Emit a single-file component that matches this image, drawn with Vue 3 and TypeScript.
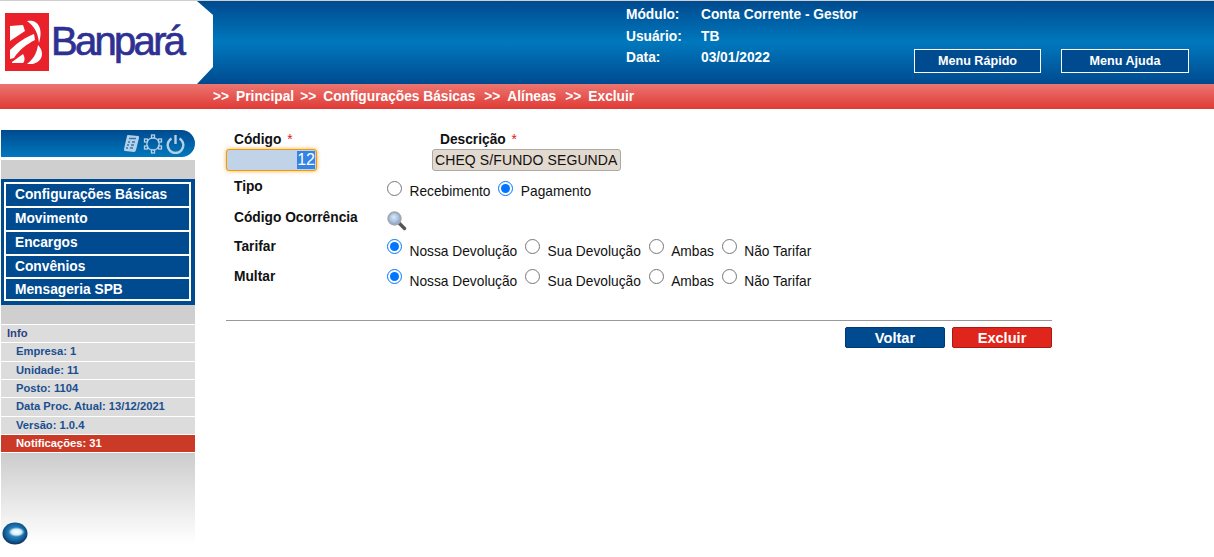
<template>
  <div class="page">
    <header class="top">
      <div class="logo">
        <svg class="logo__mark" width="44" height="58" viewBox="0 0 44 58">
          <rect width="44" height="58" fill="#e8212b" />
          <g fill="#fff">
            <path d="M5 13 L18 12 L20 18 L5 28 Z" />
            <path d="M22 8 C32 6 39 14 34 30 C33 20 30 14 22 8 Z" />
            <path d="M5 37 C13 29 21 24 29 21 L30 27 C22 31 14 37 9 45 L5 46 Z" />
            <path d="M7 49 L18 41 C20 44 20 48 18 50 L7 50 Z" />
            <path d="M33 32 C39 38 39 48 28 51 L22 51 C30 45 32 38 33 32 Z" />
          </g>
        </svg>
        <span class="logo__text">Banpará</span>
      </div>
      <div class="info">
        <template v-for="row in infoRows" :key="row.label">
          <span>{{ row.label }}</span>
          <span>{{ row.value }}</span>
        </template>
      </div>
      <div class="top__menu">
        <button class="menu-btn">Menu Rápido</button>
        <button class="menu-btn">Menu Ajuda</button>
      </div>
    </header>

    <nav class="crumb">
      <span v-for="item in crumbs" :key="item" class="crumb__item"><span>&gt;&gt;</span><span>{{ item }}</span></span>
    </nav>

    <div class="content">
      <aside class="side">
        <div class="side__head">
          <svg width="17" height="19" viewBox="0 0 17 19">
            <path d="M5 1 L15 2 Q16.500 2 16 4 L13 16 Q12.500 18 11 18 L2 17 Q0.500 17 1 15 L4 2 Q4 1 5 1 Z" fill="#b5d0e6" />
            <path d="M6 4.500 H13 M5 8 H7 M9 8 H12 M4 11 H6 M8 11 H11 M3 14 H5 M7 14 H10" stroke="#2f78b4" stroke-width="1.300" fill="none" />
          </svg>
          <svg width="20" height="20" viewBox="0 0 20 20" fill="none" stroke="#b5d0e6" stroke-width="1.300">
            <circle cx="10" cy="10" r="6.200" />
            <rect x="8.500" y="1" width="3" height="3" fill="#0a5fa3" />
            <rect x="8.500" y="16" width="3" height="3" fill="#0a5fa3" />
            <rect x="1.500" y="5" width="3" height="3" fill="#0a5fa3" />
            <rect x="15.500" y="5" width="3" height="3" fill="#0a5fa3" />
            <rect x="1.500" y="12" width="3" height="3" fill="#0a5fa3" />
            <rect x="15.500" y="12" width="3" height="3" fill="#0a5fa3" />
          </svg>
          <svg width="19" height="20" viewBox="0 0 19 20" fill="none" stroke="#b5d0e6" stroke-width="2.400">
            <path d="M5.500 4.500 A7.800 7.800 0 1 0 13.500 4.500" />
            <path d="M9.500 1 V10" />
          </svg>
        </div>
        <div class="side__grey"></div>
        <ul class="side__menu">
          <li v-for="item in menu" :key="item">{{ item }}</li>
        </ul>
        <div class="side__grey side__grey--second"></div>
        <div class="side__rows">
          <div class="side__title">Info</div>
          <div v-for="row in sideRows" :key="row" class="side__row">{{ row }}</div>
          <div class="side__row side__row--alert">Notificações: 31</div>
        </div>
        <div class="side__fade">
          <svg width="26" height="25" viewBox="0 0 26 25">
            <defs>
              <radialGradient id="bubble" cx="0.5" cy="0.45" r="0.55">
                <stop offset="0" stop-color="#4fa6d8" />
                <stop offset="0.7" stop-color="#14629f" />
                <stop offset="1" stop-color="#0b2f5c" />
              </radialGradient>
              <radialGradient id="shine" cx="0.5" cy="0.5" r="0.5">
                <stop offset="0" stop-color="#ffffff" />
                <stop offset="0.6" stop-color="#d5edf8" />
                <stop offset="1" stop-color="#6fbbe0" stop-opacity="0" />
              </radialGradient>
            </defs>
            <ellipse cx="13" cy="12.500" rx="12.500" ry="11" fill="url(#bubble)" />
            <ellipse cx="14.500" cy="11" rx="8.500" ry="5" fill="url(#shine)" />
          </svg>
        </div>
      </aside>

      <main class="form">
        <div class="form__top">
          <div class="field field--code">
            <label>Código <i>*</i></label>
            <input ref="codeRef" class="code-input" value="12" readonly />
          </div>
          <div class="field field--desc">
            <label>Descrição <i>*</i></label>
            <input class="desc-input" value="CHEQ S/FUNDO SEGUNDA" readonly />
          </div>
        </div>

        <div class="row row--tipo">
          <b>Tipo</b>
          <div class="options">
            <label v-for="opt in tipos" :key="opt.text">
              <input type="radio" name="tipo" :checked="opt.on" />
              <span>{{ opt.text }}</span>
            </label>
          </div>
        </div>

        <div class="row row--ocorr">
          <b>Código Ocorrência</b>
          <svg width="20" height="20" viewBox="0 0 20 20">
            <defs>
              <radialGradient id="lens" cx="0.45" cy="0.4" r="0.6">
                <stop offset="0" stop-color="#dce9f8" />
                <stop offset="0.7" stop-color="#9dbbe0" />
                <stop offset="1" stop-color="#8aa0bc" />
              </radialGradient>
            </defs>
            <path d="M11.500 11.500 L17.500 17.500" stroke="#555" stroke-width="3.400" stroke-linecap="round" />
            <circle cx="7.500" cy="7.500" r="6.300" fill="url(#lens)" stroke="#a3a8ad" stroke-width="1.800" />
          </svg>
        </div>

        <div v-for="group in radioGroups" :key="group" class="row row--tarifa">
          <b>{{ group }}</b>
          <div class="options">
            <label v-for="(opt, idx) in tarifas" :key="opt">
              <input type="radio" :name="group" :checked="idx === 0" />
              <span>{{ opt }}</span>
            </label>
          </div>
        </div>

        <hr class="form__rule" />
        <div class="form__actions">
          <button class="act act--blue">Voltar</button>
          <button class="act act--red">Excluir</button>
        </div>
      </main>
    </div>
  </div>
</template>

<script setup lang="ts">
import { onMounted, ref } from "vue";

const infoRows = [
  { label: "Módulo:", value: "Conta Corrente - Gestor" },
  { label: "Usuário:", value: "TB" },
  { label: "Data:", value: "03/01/2022" },
];
const crumbs = ["Principal", "Configurações Básicas", "Alíneas", "Excluir"];
const menu = ["Configurações Básicas", "Movimento", "Encargos", "Convênios", "Mensageria SPB"];
const sideRows = [
  "Empresa: 1",
  "Unidade: 11",
  "Posto: 1104",
  "Data Proc. Atual: 13/12/2021",
  "Versão: 1.0.4",
];
const tipos = [
  { text: "Recebimento", on: false },
  { text: "Pagamento", on: true },
];
const radioGroups = ["Tarifar", "Multar"];
const tarifas = ["Nossa Devolução", "Sua Devolução", "Ambas", "Não Tarifar"];

const codeRef = ref<HTMLInputElement | null>(null);

onMounted(() => {
  codeRef.value?.focus();
  codeRef.value?.select();
});
</script>

<style>
html,
body {
  background: #fff;
}
</style>

<style scoped>
.page {
  font-family: "Liberation Sans", Arial, sans-serif;
  font-size: 13.750px;
  color: #111;
  height: 557px;
  overflow: hidden;
}
.top {
  display: flex;
  height: 83px;
  border-top: 1px solid #cfcfcf;
  background: linear-gradient(#004a8f 0%, #0078bd 50%, #004a8f 100%);
}
.logo {
  width: 213px;
  display: flex;
  align-items: center;
  gap: 2px;
  padding: 0 0 0 5px;
  box-sizing: border-box;
  background: #fff;
  clip-path: polygon(0 0, 197px 0, 213px 14px, 213px 66px, 197px 83px, 0 83px);
}
.logo__mark {
  flex: none;
  margin-top: -2px;
}
.logo__text {
  font-size: 40px;
  letter-spacing: -2.700px;
  color: #2e3192;
  -webkit-text-stroke: 0.700px #2e3192;
  margin-top: -2px;
}
.info {
  margin-left: 413px;
  padding-top: 3px;
  display: grid;
  grid-template-columns: 75px auto;
  grid-auto-rows: 21.500px;
  align-items: center;
  align-content: start;
  color: #fff;
  font-weight: bold;
  height: 66px;
}
.top__menu {
  margin-left: auto;
  margin-right: 25px;
  padding-top: 48px;
  display: flex;
  gap: 20px;
}
.menu-btn {
  width: 127px;
  height: 24px;
  box-sizing: border-box;
  border: 1px solid #fff;
  background: #004a8f;
  color: #fff;
  font: bold 12.600px "Liberation Sans", Arial, sans-serif;
  padding: 0;
}
.menu-btn + .menu-btn {
  width: 128px;
}
.crumb {
  height: 25px;
  box-sizing: border-box;
  padding-left: 213px;
  display: flex;
  align-items: center;
  gap: 9px;
  background: linear-gradient(#ec7570, #e03a35);
  color: #fff;
  font-weight: bold;
}
.crumb__item {
  display: flex;
  gap: 7px;
}
.crumb__item:nth-child(2) {
  margin-left: -3px;
}
.content {
  display: flex;
  padding-top: 21px;
}
.side {
  width: 194px;
  margin-left: 1px;
  flex: none;
}
.side__head {
  height: 27px;
  display: flex;
  align-items: center;
  justify-content: flex-end;
  gap: 3px;
  padding-right: 10px;
  box-sizing: border-box;
  border-radius: 0 14px 14px 0;
  background: linear-gradient(#004a8f, #0078bd);
}
.side__grey {
  height: 19px;
  margin-top: 3px;
  background: #cfcfcf;
}
.side__grey--second {
  margin-top: 0;
}
.side__menu {
  list-style: none;
  margin: 0;
  padding: 3px 4px 3px 3px;
  background: #004a8f;
  height: 126px;
  box-sizing: border-box;
}
.side__menu li {
  height: 24px;
  line-height: 21px;
  box-sizing: border-box;
  border: 2px solid #fff;
  border-bottom-width: 0;
  padding-left: 9px;
  color: #fff;
  font-weight: bold;
}
.side__menu li:nth-child(4) {
  height: 23px;
}
.side__menu li:last-child {
  border-bottom-width: 2px;
}
.side__rows {
  font-weight: bold;
  font-size: 11.200px;
  color: #1a4f8f;
}
.side__title,
.side__row {
  height: 18.330px;
  line-height: 16.500px;
  box-sizing: border-box;
  background: #dcdcdc;
  border-top: 1px solid #fff;
}
.side__title {
  padding-left: 6px;
  color: #2e3f86;
}
.side__row {
  padding-left: 15px;
}
.side__row--alert {
  background: #cb3a26;
  color: #fff;
  border-bottom: 1px solid #fff;
  height: 19px;
}
.side__fade {
  height: 90px;
  box-sizing: border-box;
  padding: 68px 0 0 1px;
  background: linear-gradient(#cccccc, #ffffff);
}
.form {
  margin-left: 31px;
  width: 826px;
}
.form__top {
  display: flex;
}
.field {
  display: flex;
  flex-direction: column;
}
.field label {
  font-weight: bold;
  height: 19px;
  line-height: 20px;
}
.field label i {
  color: #e02020;
  font-weight: normal;
  font-style: normal;
  margin-left: 2px;
}
.field--code {
  width: 206px;
}
.field--code label,
.field--desc label {
  padding-left: 8px;
}
.code-input,
.desc-input {
  height: 22px;
  box-sizing: border-box;
  color: #111;
  outline: none;
}
.code-input {
  width: 91px;
  text-align: right;
  padding: 0 1px;
  font: 16px "Liberation Sans", Arial, sans-serif;
  background: #c0d3e8;
  border: 1px solid #f59a00;
  border-radius: 3px;
  box-shadow: 0 0 4px #f5b04a;
}
.code-input::selection {
  background: #3584e4;
  color: #fff;
}
.desc-input {
  width: 189px;
  padding: 0 2px;
  font: 14px "Liberation Sans", Arial, sans-serif;
  letter-spacing: 0.100px;
  background: #e2d9cf;
  border: 1px solid #aaa;
  border-radius: 3px;
}
.row {
  display: flex;
  align-items: flex-start;
}
.row > b {
  width: 161px;
  padding-left: 8px;
  box-sizing: border-box;
  flex: none;
}
.options {
  display: flex;
  gap: 7.800px;
}
.options label {
  display: flex;
  align-items: flex-start;
}
.options input {
  width: 15px;
  height: 15px;
  margin: 2px 7.500px 0 0;
}
.options span {
  margin-top: 5px;
}
.row--tipo {
  margin-top: 8px;
  height: 30px;
}
.row--ocorr {
  height: 26px;
  margin-top: 2px;
}
.row--ocorr > b {
  margin-top: -1px;
}
.row--tarifa {
  height: 30px;
}
.row--tarifa > b {
  margin-top: 2px;
}
.row--tarifa .options span {
  margin-top: 7px;
}
.form__rule {
  border: none;
  border-top: 1px solid #999;
  margin: 23px 0 6px;
}
.form__actions {
  display: flex;
  justify-content: flex-end;
  gap: 7px;
}
.act {
  width: 100px;
  height: 21px;
  padding: 0;
  border: 1px solid #003a75;
  border-radius: 2px;
  color: #fff;
  font: bold 14.600px "Liberation Sans", Arial, sans-serif;
}
.act--blue {
  background: #004a8f;
}
.act--red {
  background: #e0251c;
  border-color: #a81a14;
}
</style>
